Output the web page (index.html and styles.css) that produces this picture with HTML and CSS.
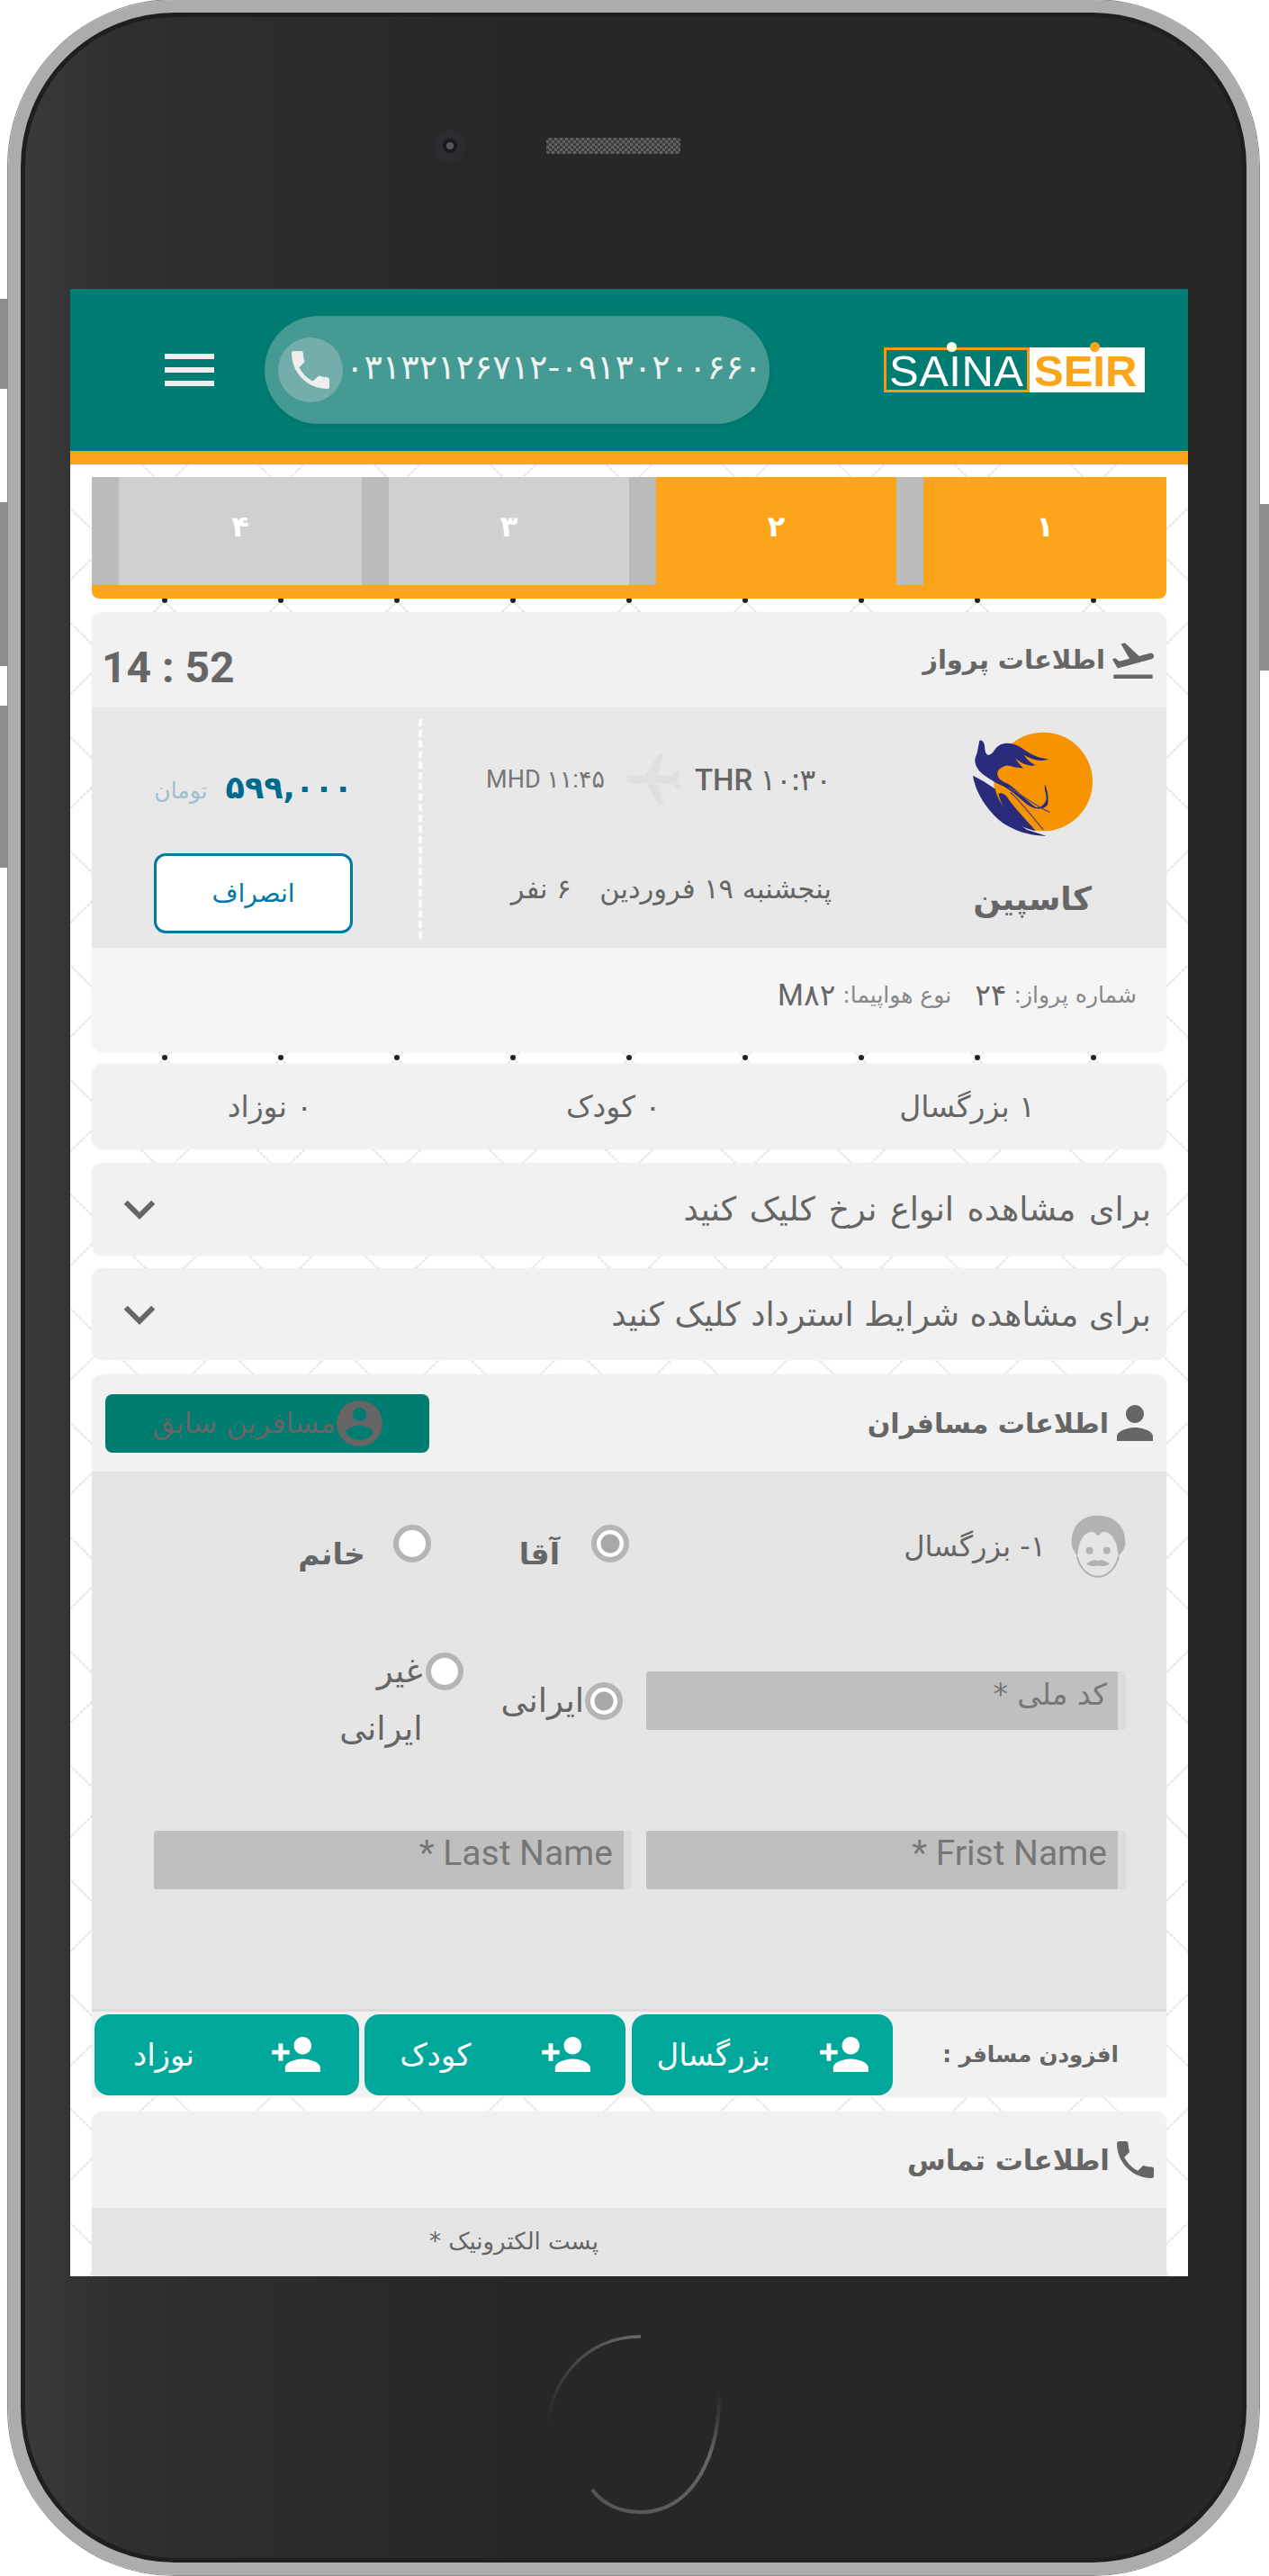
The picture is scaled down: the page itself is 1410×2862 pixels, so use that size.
FILE: index.html
```html
<!DOCTYPE html>
<html lang="fa">
<head>
  <meta charset="UTF-8">
  <title>Saina Seir</title>
  <link rel="stylesheet" href="styles.css">
</head>
<body>
  <div class="side-btn side-a"></div>
  <div class="side-btn side-b"></div>
  <div class="side-btn side-c"></div>
  <div class="side-btn side-d"></div>

  <div class="phone">
    <div class="phone-top">
      <div class="camera"><span></span></div>
      <div class="speaker"></div>
    </div>

    <div class="screen" dir="rtl">
      <header class="topbar" dir="ltr">
        <div class="burger"><span></span><span></span><span></span></div>
        <div class="call-pill">
          <div class="call-icon">
            <svg viewBox="3 3 18 18"><path d="M6.62 10.79c1.44 2.83 3.76 5.14 6.59 6.59l2.2-2.2c.27-.27.67-.36 1.02-.24 1.12.37 2.33.57 3.57.57.55 0 1 .45 1 1V20c0 .55-.45 1-1 1-9.39 0-17-7.61-17-17 0-.55.45-1 1-1h3.5c.55 0 1 .45 1 1 0 1.25.2 2.45.57 3.57.11.35.03.74-.25 1.02l-2.2 2.2z"/></svg>
          </div>
          <span class="call-number">۰۳۱۳۲۱۲۶۷۱۲-۰۹۱۳۰۲۰۰۶۶۰</span>
        </div>
        <div class="logo">
          <div class="logo-a">SAINA<i class="dot dot-a"></i></div>
          <div class="logo-b">SEIR<i class="dot dot-b"></i></div>
        </div>
      </header>

      <main class="content">
        <div class="steps">
          <div class="step done">۱</div>
          <div class="step done">۲</div>
          <div class="step">۳</div>
          <div class="step">۴</div>
        </div>

        <section class="card flight-card">
          <div class="card-head flight-head">
            <svg class="head-icon plane-icon" viewBox="2 3 20 18"><path d="M2.5 19h19v2h-19zm19.57-9.36c-.21-.8-1.04-1.28-1.84-1.06L14.92 10l-6.9-6.43-1.93.51 4.14 7.17-4.97 1.33-1.97-1.54-1.45.39 1.82 3.16.77 1.33 1.6-.43 5.31-1.42 4.35-1.16L21 11.49c.81-.23 1.28-1.05 1.07-1.85z"/></svg>
            <h3>اطلاعات پرواز</h3>
            <span class="timer" dir="ltr">14 : 52</span>
          </div>
          <div class="flight-body">
            <div class="airline">
              <svg class="airline-logo" viewBox="120 90 400 355">
                <circle cx="355" cy="260" r="165" fill="#f59300"/>
                <path fill="#2a2a7c" d="M142 122C152 118 160 130 160 150 162 176 178 178 194 152 210 126 250 124 285 148 310 168 340 182 372 184 350 194 320 190 290 170 300 185 315 200 330 204 310 212 280 198 262 182 272 198 280 208 290 214 270 216 245 206 232 206 210 212 195 225 205 245 215 262 235 262 255 280 280 300 300 325 330 345 345 350 360 335 365 320 368 300 355 285 362 270 372 300 375 325 368 340 350 358 320 350 300 335 275 315 245 285 215 272 190 260 165 245 150 232 130 215 122 190 130 175 136 160 138 140 142 122Z"/>
                <path fill="#2a2a7c" d="M120 240C145 252 170 268 195 285 200 320 240 380 300 420 320 428 345 432 365 442 320 440 280 432 240 410 190 385 130 310 120 240Z"/>
                <path fill="#2a2a7c" d="M205 300C215 295 230 300 240 320 270 360 310 400 330 425 290 415 260 400 235 370 220 345 210 320 205 300Z"/>
                <path fill="none" stroke="#5a4a6e" stroke-width="4" d="M240 280C280 300 340 350 378 362M245 295C280 325 320 380 355 420"/>
              </svg>
              <div class="airline-name">کاسپین</div>
            </div>
            <div class="route">
              <div class="route-line">
                <span class="from" dir="ltr">THR ۱۰:۳۰</span>
                <svg class="route-plane" viewBox="2 2 19 20"><path d="M21 16v-2l-8-5V3.5c0-.83-.67-1.5-1.5-1.5S10 2.67 10 3.5V9l-8 5v2l8-2.5V19l-2 1.5V22l3.5-1 3.5 1v-1.5L13 19v-5.5l8 2.5z"/></svg>
                <span class="to" dir="ltr">MHD ۱۱:۴۵</span>
              </div>
              <div class="route-date">پنجشنبه ۱۹ فروردین <span class="route-people">۶ نفر</span></div>
            </div>
            <div class="price-box">
              <div class="price"><b>۵۹۹,۰۰۰</b><small>تومان</small></div>
              <a class="cancel-btn">انصراف</a>
            </div>
          </div>
          <div class="flight-foot">
            <span class="foot-label">شماره پرواز:</span><span class="foot-value">۲۴</span>
            <span class="foot-label foot-next">نوع هواپیما:</span><span class="foot-value">M۸۲</span>
          </div>
        </section>

        <section class="card counts">
          <span>۱ بزرگسال</span>
          <span>۰ کودک</span>
          <span>۰ نوزاد</span>
        </section>

        <section class="card accordion acc-one">
          <span>برای مشاهده انواع نرخ کلیک کنید</span>
          <svg class="chevron" viewBox="6 8 12 8"><path d="M7.41 8.59L12 13.17l4.59-4.58L18 10l-6 6-6-6 1.41-1.41z"/></svg>
        </section>

        <section class="card accordion acc-two">
          <span>برای مشاهده شرایط استرداد کلیک کنید</span>
          <svg class="chevron" viewBox="6 8 12 8"><path d="M7.41 8.59L12 13.17l4.59-4.58L18 10l-6 6-6-6 1.41-1.41z"/></svg>
        </section>

        <section class="card passengers">
          <div class="card-head pax-head">
            <svg class="head-icon person-icon" viewBox="4 4 16 16"><path d="M12 12c2.21 0 4-1.79 4-4s-1.79-4-4-4-4 1.79-4 4 1.79 4 4 4zm0 2c-2.67 0-8 1.34-8 4v2h16v-2c0-2.66-5.33-4-8-4z"/></svg>
            <h3>اطلاعات مسافران</h3>
            <a class="prev-btn">
              <svg viewBox="2 2 20 20"><path d="M12 2C6.48 2 2 6.48 2 12s4.48 10 10 10 10-4.48 10-10S17.52 2 12 2zm0 3c1.66 0 3 1.34 3 3s-1.34 3-3 3-3-1.34-3-3 1.34-3 3-3zm0 14.2c-2.5 0-4.71-1.28-6-3.22.03-1.99 4-3.08 6-3.08 1.99 0 5.97 1.09 6 3.08-1.29 1.94-3.5 3.22-6 3.22z"/></svg>
              مسافرین سابق
            </a>
          </div>
          <div class="pax-body">
            <div class="pax-row">
              <svg class="avatar" viewBox="60 68 184 210">
                <path fill="#b2b2b2" d="M150 70C95 70 60 105 62 165 64 185 75 195 80 205 85 190 85 165 95 150 105 130 125 120 135 125L150 138 165 125C175 120 195 130 205 150 215 165 215 190 220 205 228 195 240 185 242 165 244 105 205 70 150 70Z"/>
                <path fill="none" stroke="#b2b2b2" stroke-width="6" d="M80 205C90 250 120 275 150 275 180 275 210 250 220 205"/>
                <circle cx="122" cy="187" r="12" fill="#b2b2b2"/>
                <circle cx="180" cy="187" r="12" fill="#b2b2b2"/>
                <path fill="#b2b2b2" d="M112 232C125 222 140 215 150 222 160 215 175 222 190 232 175 242 160 240 150 238 140 240 125 242 112 232Z"/>
              </svg>
              <span class="pax-title">۱- بزرگسال</span>
              <div class="gender">
                <span class="radio checked"></span><b class="gender-a">آقا</b>
                <span class="radio radio-b"></span><b>خانم</b>
              </div>
            </div>

            <div class="pax-row row-id">
              <div class="field">کد ملی *</div>
              <span class="radio checked radio-iran"></span>
              <span class="nat-label">ایرانی</span>
              <span class="radio radio-other"></span>
              <span class="nat-label nat-other">غیر ایرانی</span>
            </div>

            <div class="pax-row row-names">
              <div class="field latin">* Frist Name</div>
              <div class="field latin field-last">* Last Name</div>
            </div>
          </div>
          <div class="add-row">
            <span class="add-label">افزودن مسافر :</span>
            <a class="add-btn wide">
              <svg viewBox="1 4 22 16"><path d="M15 12c2.21 0 4-1.79 4-4s-1.79-4-4-4-4 1.79-4 4 1.79 4 4 4zm-9-2V7H4v3H1v2h3v3h2v-3h3v-2H6zm9 4c-2.67 0-8 1.34-8 4v2h16v-2c0-2.66-5.33-4-8-4z"/></svg>
              <span>بزرگسال</span>
            </a>
            <a class="add-btn">
              <svg viewBox="1 4 22 16"><path d="M15 12c2.21 0 4-1.79 4-4s-1.79-4-4-4-4 1.79-4 4 1.79 4 4 4zm-9-2V7H4v3H1v2h3v3h2v-3h3v-2H6zm9 4c-2.67 0-8 1.34-8 4v2h16v-2c0-2.66-5.33-4-8-4z"/></svg>
              <span>کودک</span>
            </a>
            <a class="add-btn last">
              <svg viewBox="1 4 22 16"><path d="M15 12c2.21 0 4-1.79 4-4s-1.79-4-4-4-4 1.79-4 4 1.79 4 4 4zm-9-2V7H4v3H1v2h3v3h2v-3h3v-2H6zm9 4c-2.67 0-8 1.34-8 4v2h16v-2c0-2.66-5.33-4-8-4z"/></svg>
              <span>نوزاد</span>
            </a>
          </div>
        </section>

        <section class="card contact">
          <div class="card-head contact-head">
            <svg class="head-icon phone-icon" viewBox="3 3 18 18"><path d="M6.62 10.79c1.44 2.83 3.76 5.14 6.59 6.59l2.2-2.2c.27-.27.67-.36 1.02-.24 1.12.37 2.33.57 3.57.57.55 0 1 .45 1 1V20c0 .55-.45 1-1 1-9.39 0-17-7.61-17-17 0-.55.45-1 1-1h3.5c.55 0 1 .45 1 1 0 1.25.2 2.45.57 3.57.11.35.03.74-.25 1.02l-2.2 2.2z"/></svg>
            <h3>اطلاعات تماس</h3>
          </div>
          <div class="contact-body">
            <span>پست الکترونیک *</span>
          </div>
        </section>
      </main>
    </div>

    <div class="phone-bottom">
      <svg class="home-btn" viewBox="0 0 200 200" fill="none">
        <defs>
          <linearGradient id="arcTop" gradientUnits="userSpaceOnUse" x1="10" y1="110" x2="100" y2="5">
            <stop offset="0" stop-color="#555" stop-opacity="0"/>
            <stop offset="1" stop-color="#666"/>
          </linearGradient>
          <linearGradient id="arcBottom" gradientUnits="userSpaceOnUse" x1="190" y1="60" x2="60" y2="190">
            <stop offset="0" stop-color="#555" stop-opacity="0"/>
            <stop offset=".3" stop-color="#666"/>
            <stop offset="1" stop-color="#555"/>
          </linearGradient>
        </defs>
        <path stroke="url(#arcTop)" stroke-width="3.5" d="M2 115C2 50 45 2 106 2"/>
        <path stroke="url(#arcBottom)" stroke-width="4" d="M192 55C198 110 175 197 105 197 80 197 62 186 52 172"/>
      </svg>
    </div>
  </div>
</body>
</html>
```

FILE: styles.css
```css
* {
  box-sizing: border-box;
}

html, body {
  margin: 0;
  padding: 0;
}

body {
  width: 1410px;
  height: 2862px;
  background: #fff;
  position: relative;
  overflow: hidden;
  font-family: Roboto, "DejaVu Sans", sans-serif;
  color: #666;
}

/* phone frame */
.phone {
  width: 1390px;
  height: 2861px;
  margin-left: 9px;
  padding: 0 65px 0 55px;
  border: 14px solid #acacac;
  border-radius: 185px;
  background: linear-gradient(90deg, #3a3a3a, #2f2f2f 8%, #272727 40%);
  box-shadow: inset 0 0 0 5px #1f1f1f, 0 0 0 1px #8a8a8a;
  position: relative;
}

.side-btn {
  position: absolute;
  left: 0;
  width: 10px;
  background: #8d8d8d;
}

.side-a { top: 332px; height: 100px; }
.side-b { top: 558px; height: 182px; }
.side-c { top: 784px; height: 180px; }
.side-d { left: auto; right: 0; top: 560px; height: 185px; }

.phone-top {
  height: 296px;
  margin-bottom: 11px;
  display: flex;
  align-items: center;
  padding-left: 404px;
  gap: 89px;
}

.camera {
  width: 36px;
  height: 36px;
  border-radius: 50%;
  background: #2c2b30;
  display: flex;
  align-items: center;
  justify-content: center;
}

.camera span {
  width: 16px;
  height: 16px;
  border-radius: 50%;
  background: #55555a;
  border: 4px solid #1a1a1e;
}

.speaker {
  width: 149px;
  height: 18px;
  background: repeating-conic-gradient(#606060 0 25%, #3c3c3c 0 50%) 0 0 / 6px 6px;
  border-radius: 3px;
}

.screen {
  width: 1242px;
  height: 2208px;
  overflow: hidden;
  background: #fff;
}

.phone-bottom {
  display: flex;
  padding: 65px 0 0 528px;
}

.home-btn {
  width: 200px;
  height: 200px;
}

/* header */
.topbar {
  height: 195px;
  background: #017c72;
  border-bottom: 15px solid #fca51a;
  display: flex;
  align-items: center;
  padding: 0 48px 0 105px;
}

.burger {
  width: 55px;
  display: flex;
  flex-direction: column;
  gap: 9px;
}

.burger span {
  height: 6px;
  background: #eee;
}

.call-pill {
  width: 561px;
  height: 120px;
  margin-left: 56px;
  border-radius: 60px;
  background: #459a93;
  display: flex;
  align-items: center;
  padding-left: 15px;
  box-shadow: 0 2px 6px rgba(0, 0, 0, .08);
}

.call-icon {
  width: 72px;
  height: 72px;
  border-radius: 50%;
  background: #74aeaa;
  display: flex;
  align-items: center;
  justify-content: center;
}

.call-icon svg {
  width: 42px;
  height: 42px;
  fill: #eee;
}

.call-number {
  margin: -6px 0 0 3px;
  font-family: "DejaVu Sans", sans-serif;
  font-size: 38px;
  letter-spacing: -3.5px;
  color: #f2f2f2;
  white-space: nowrap;
}

.logo {
  margin-left: auto;
  display: flex;
  height: 50px;
  width: 290px;
  font-family: "Liberation Sans", sans-serif;
  font-size: 49px;
  line-height: 46px;
  position: relative;
}

.logo-a {
  width: 162px;
  border: 3px solid #f59a12;
  color: #fff;
  padding-left: 3px;
  letter-spacing: .5px;
  white-space: nowrap;
}

.logo-b {
  width: 128px;
  background: #fff;
  color: #fca51a;
  font-weight: bold;
  padding: 3px 0 0 5px;
}

.dot {
  position: absolute;
  top: -6px;
  width: 11px;
  height: 11px;
  border-radius: 50%;
  background: #fff;
}

.dot-a { left: 70px; }
.dot-b { left: 229px; background: #fca51a; }

/* page body */
.content {
  height: 2013px;
  padding: 14px 24px 0;
  background: #fff url("data:image/svg+xml,%3Csvg xmlns='http://www.w3.org/2000/svg' width='129' height='508'%3E%3Cg fill='none' stroke='%23e6e6e6' stroke-width='2' stroke-dasharray='4 1'%3E%3Cpath d='M40.5 -38.5L105 25L40.5 88.5L105 152L40.5 215.5L105 279L40.5 342.5L105 406L40.5 469.5L105 533'/%3E%3Cpath d='M169.5 -38.5L105 25L169.5 88.5L105 152L169.5 215.5L105 279L169.5 342.5L105 406L169.5 469.5L105 533'/%3E%3Cpath d='M-24 25L40.5 88.5L-24 152L40.5 215.5L-24 279L40.5 342.5L-24 406L40.5 469.5L-24 533M-24 -102L40.5 -38.5L-24 25'/%3E%3C/g%3E%3Ccircle cx='105' cy='151' r='3' fill='%23222'/%3E%3C/svg%3E");
}

.steps {
  height: 135px;
  display: flex;
  background: #fca51a;
  padding-bottom: 15px;
  border-radius: 0 0 8px 8px;
}

.step {
  flex: none;
  width: 297px;
  background: #d0d0d0;
  border-left: 30px solid #bbb;
  display: flex;
  align-items: center;
  justify-content: center;
  padding-bottom: 10px;
  color: #fff;
  font-family: "DejaVu Sans", sans-serif;
  font-weight: bold;
  font-size: 32px;
}

.step:first-child,
.step:last-child {
  width: 300px;
}

.step.done {
  background: #fca51a;
}

.card {
  background: #f1f1f1;
  border-radius: 12px;
  box-shadow: 0 0 3px rgba(0, 0, 0, .05);
  overflow: hidden;
}

.card-head {
  display: flex;
  align-items: center;
  padding-right: 14px;
}

.card-head h3 {
  margin: 0 8px 0 0;
  font-family: "DejaVu Sans", sans-serif;
  font-size: 29px;
  font-weight: bold;
  color: #666;
}

.head-icon {
  fill: #666;
  flex: none;
}

.flight-card {
  margin-top: 15px;
}

.flight-head {
  height: 106px;
}

.plane-icon {
  width: 46px;
  height: 41px;
}

.timer {
  margin: 17px auto 0 11px;
  font-size: 48px;
  font-weight: bold;
  line-height: 1;
}

.flight-body {
  height: 267px;
  background: #e8e8e8;
  display: flex;
}

.airline {
  width: 298px;
  padding-top: 26px;
  text-align: center;
}

.airline-logo {
  width: 133px;
  height: 118px;
  display: block;
  margin: 0 auto;
}

.airline-name {
  margin-top: 48px;
  font-family: "DejaVu Sans", sans-serif;
  font-size: 36px;
  font-weight: bold;
}

.route {
  width: 529px;
  padding: 58px 74px 0 0;
}

.route-line {
  display: flex;
  align-items: center;
  height: 44px;
}

.from {
  font-size: 33px;
  font-weight: 500;
}

.route-plane {
  width: 58px;
  height: 60px;
  margin: 0 17px 0 25px;
  fill: #e0e0e0;
  transform: rotate(-90deg);
  flex: none;
}

.to {
  font-size: 27px;
  color: #777;
}

.route-date {
  margin-top: 82px;
  font-family: "DejaVu Sans", sans-serif;
  font-size: 30.5px;
}

.route-people {
  margin-right: 22px;
}

.price-box {
  flex: 1;
  margin: 13px 0 10px;
  border-right: 4px dashed #fbfbfb;
  padding: 0 73px 0 66px;
  display: flex;
  flex-direction: column;
}

.price {
  height: 149px;
  display: flex;
  align-items: center;
  color: #006a8e;
  white-space: nowrap;
}

.price b {
  font-family: "DejaVu Sans", sans-serif;
  font-size: 35px;
  letter-spacing: -1px;
  margin-top: 3px;
}

.price small {
  margin: 9px 20px 0 0;
  font-family: "DejaVu Sans", sans-serif;
  font-size: 25px;
  color: #9fc0cd;
}

.cancel-btn {
  width: 221px;
  height: 89px;
  border: 3px solid #0179a5;
  border-radius: 13px;
  background: #fff;
  color: #0179a5;
  display: flex;
  align-items: center;
  justify-content: center;
  font-family: "DejaVu Sans", sans-serif;
  font-size: 28px;
}

.flight-foot {
  height: 116px;
  background: #f5f5f5;
  display: flex;
  align-items: center;
  padding: 0 33px 0 0;
  font-family: "DejaVu Sans", sans-serif;
}

.foot-label {
  font-size: 25px;
  color: #888;
  margin-bottom: 12px;
}

.foot-value {
  margin: 0 8px 12px 0;
  font-size: 33px;
  color: #666;
  font-family: Roboto, "DejaVu Sans", sans-serif;
}

.foot-next {
  margin-right: 26px;
}

.counts {
  margin-top: 13px;
  height: 95px;
  display: flex;
  align-items: center;
  font-family: "DejaVu Sans", sans-serif;
  font-size: 33px;
}

.counts span:nth-child(1) { margin-right: 146px; }
.counts span:nth-child(2) { margin-right: 265px; }
.counts span:nth-child(3) { margin-right: 282px; }

.accordion {
  display: flex;
  align-items: center;
  justify-content: space-between;
  padding: 0 17px 0 35px;
  font-family: "DejaVu Sans", sans-serif;
  font-size: 36.5px;
}

.acc-one {
  margin-top: 15px;
  height: 103px;
  word-spacing: 3px;
}

.acc-two {
  margin-top: 14px;
  height: 102px;
}

.chevron {
  width: 36px;
  height: 23px;
  fill: #666;
}

.passengers {
  margin-top: 16px;
  border-radius: 12px 12px 0 0;
}

.pax-head {
  height: 108px;
}

.pax-head h3 {
  font-size: 30px;
}

.person-icon {
  width: 42px;
  height: 40px;
}

.prev-btn {
  margin: 0 auto 0 15px;
  width: 360px;
  height: 65px;
  border-radius: 8px;
  background: #007c71;
  color: #666;
  display: flex;
  align-items: center;
  justify-content: center;
  gap: 1px;
  font-family: "DejaVu Sans", sans-serif;
  font-size: 32px;
  white-space: nowrap;
}

.prev-btn svg {
  width: 51px;
  height: 51px;
  fill: #666;
}

.pax-body {
  height: 597px;
  padding: 48px 45px 0 0;
  background: #e5e5e5;
}

.pax-row {
  display: flex;
  align-items: center;
  font-family: "DejaVu Sans", sans-serif;
}

.avatar {
  width: 61px;
  height: 70px;
  flex: none;
}

.pax-title {
  margin-right: 28px;
  width: 156px;
  font-size: 32px;
  white-space: nowrap;
}

.gender {
  display: flex;
  align-items: center;
  margin-right: 307px;
  font-size: 33px;
}

.gender b {
  margin-top: 16px;
  margin-right: 31px;
}

.gender .gender-a {
  margin-right: 35px;
  margin-left: 98px;
}

.radio {
  width: 42px;
  height: 42px;
  flex: none;
  border-radius: 50%;
  border: 6px solid #b5b5b5;
  background: #fff;
  margin-top: -6px;
}

.radio.checked {
  background: radial-gradient(circle, #a9a9a9 0, #a9a9a9 10px, #fff 11px);
}

.row-id {
  height: 128px;
  margin-top: 72px;
}

.field {
  width: 533px;
  height: 65px;
  flex: none;
  padding: 0 12px 0 0;
  background: #bfbfbf;
  border-right: 9px solid #dcdcdc;
  border-radius: 3px;
  font-size: 33px;
  line-height: 52px;
  color: #777;
}

.radio-iran {
  margin: 2px 26px 0 0;
}

.nat-label {
  margin-right: 1px;
  font-size: 37px;
}

.radio-other {
  margin: -64px 42px 0 0;
}

.nat-other {
  width: 100px;
  margin-right: 3px;
  line-height: 64px;
  white-space: normal;
}

.row-names {
  margin-top: 81px;
  gap: 16px;
}

.field.latin {
  direction: ltr;
  text-align: right;
  padding-right: 12px;
  font-family: Roboto, sans-serif;
  font-size: 39px;
  line-height: 50px;
  color: #777;
}

.field-last {
  width: 531px;
}

.add-row {
  height: 98px;
  border-top: 3px solid #dcdcdc;
  display: flex;
  align-items: center;
  padding-left: 3px;
}

.add-label {
  width: 304px;
  padding-right: 53px;
  font-family: "DejaVu Sans", sans-serif;
  font-size: 24.5px;
  font-weight: bold;
  white-space: nowrap;
}

.add-btn {
  width: 290px;
  height: 90px;
  margin-left: 7px;
  border-radius: 16px;
  background: #00a89c;
  color: #fff;
  display: flex;
  align-items: center;
  justify-content: space-around;
  font-family: "DejaVu Sans", sans-serif;
  font-size: 34px;
}

.add-btn.last {
  width: 294px;
  margin-left: 0;
  margin-right: -1px;
}

.add-btn svg {
  width: 54px;
  height: 39px;
  fill: #fff;
}

.contact {
  margin-top: 16px;
  height: 200px;
  border-radius: 12px 12px 0 0;
}

.contact-head {
  height: 107px;
}

.contact-head h3 {
  font-size: 31px;
}

.phone-icon {
  width: 41px;
  height: 41px;
}

.contact-body {
  height: 93px;
  background: #e5e5e5;
  padding: 22px 631px 0 0;
  font-family: "DejaVu Sans", sans-serif;
  font-size: 26px;
}
```
